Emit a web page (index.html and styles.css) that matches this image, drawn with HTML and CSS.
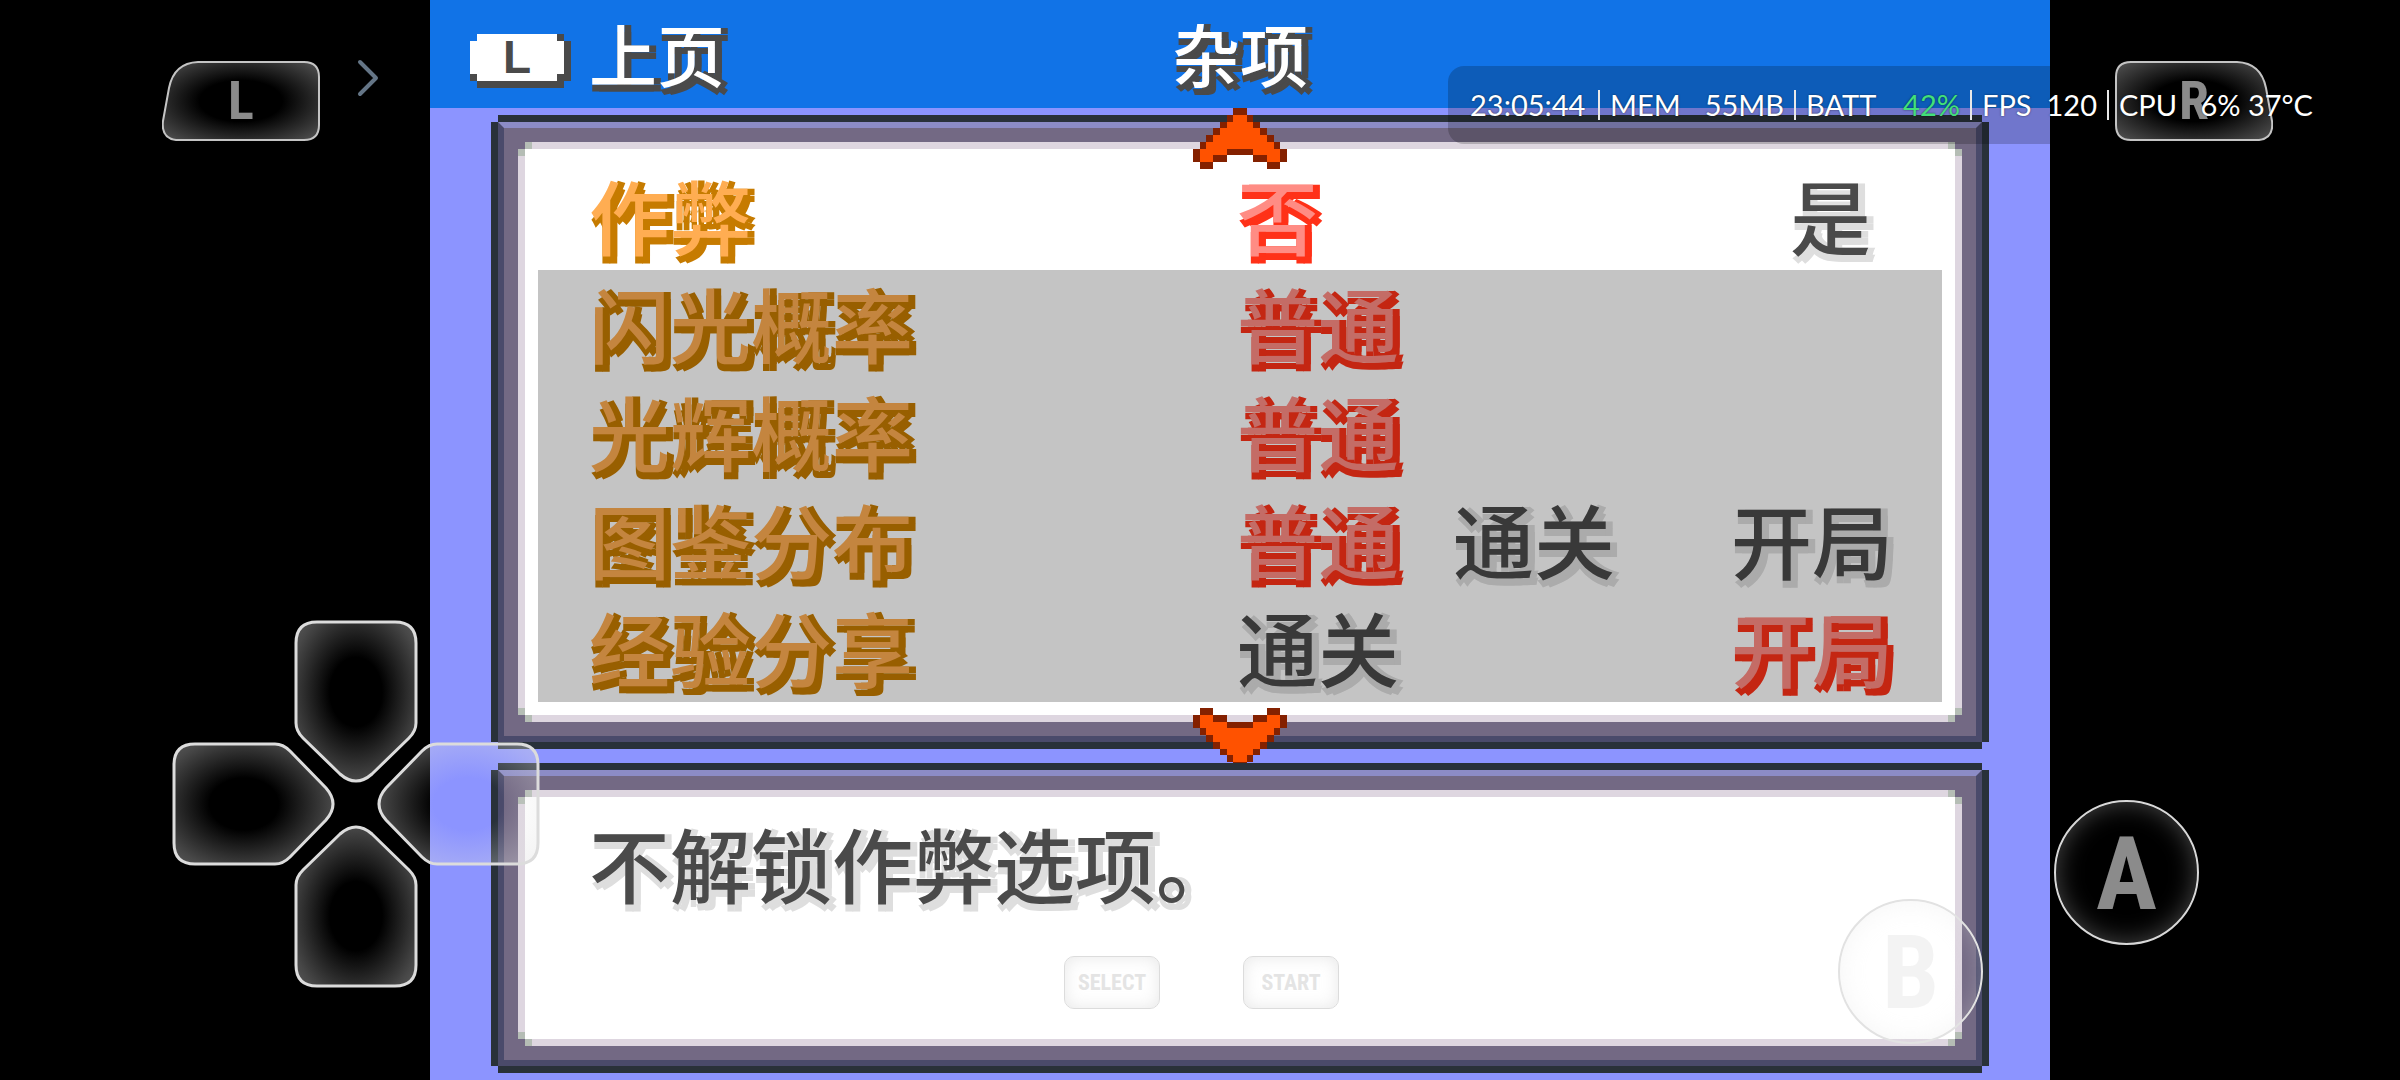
FILE: index.html
```
<!DOCTYPE html>
<html lang="zh-CN">
<head>
    <meta charset="UTF-8">
    <meta name="viewport" content="width=device-width, initial-scale=1.0">
    <title>杂项</title>
    <link rel="stylesheet" href="styles.css">
</head>
<body>

<!-- Shared shapes -->
<svg class="shapes" aria-hidden="true">
    <defs>
        <radialGradient id="glow" cx="50%" cy="44%" r="62%">
            <stop offset="0.35" stop-color="#e0e0e0" stop-opacity="0"/>
            <stop offset="0.9" stop-color="#e0e0e0" stop-opacity="0.32"/>
            <stop offset="1" stop-color="#e0e0e0" stop-opacity="0.36"/>
        </radialGradient>
        <radialGradient id="glowWide" cx="50%" cy="50%" r="66%">
            <stop offset="0.4" stop-color="#e0e0e0" stop-opacity="0"/>
            <stop offset="1" stop-color="#e0e0e0" stop-opacity="0.34"/>
        </radialGradient>
        <symbol id="arm" viewBox="0 0 124 164">
            <path d="M23 2H101Q122 2 122 23V103Q122 111 115 118L78 154Q62 168 46 154L9 118Q2 111 2 103V23Q2 2 23 2Z" fill="url(#glow)" stroke="#dcdcdc" stroke-width="3"/>
        </symbol>
        <symbol id="shoulder" viewBox="0 0 158 80">
            <path d="M36 1H142Q157 1 157 16V64Q157 79 142 79H14Q-1 77 1 60L7 27Q12 2 36 1Z" fill="url(#glowWide)" stroke="#c4c4c4" stroke-width="2"/>
        </symbol>
        <symbol id="scroll" viewBox="0 0 14 9">
            <path fill="#842100" d="M1 0h2v1h2v1h4v-1h2v-1h2v1h1v2h-1v1h-1v1h-1v1h-1v1h-1v1h-1v1h-2v-1h-1v-1h-1v-1h-1v-1h-1v-1h-1v-1h-1v-2h1z"/>
            <path fill="#ff5200" d="M1 1h2v1h2v1h4v-1h2v-1h2v2h-1v1h-1v1h-1v1h-1v1h-1v1h-2v-1h-1v-1h-1v-1h-1v-1h-1v-1h-1z"/>
        </symbol>
    </defs>
</svg>

<main class="game">
    <header class="topbar">
        <button class="prev" type="button"><span class="badge"><span class="badge-key">L</span></span>上页</button>
        <h1>杂项</h1>
    </header>

    <div class="windows">
        <form class="window">
            <div class="edge"><div class="bevel"><div class="panel">
                <div class="row yes-no" role="radiogroup" aria-labelledby="cheat">
                    <span class="name" id="cheat">作弊</span>
                    <div class="options">
                        <label><input type="radio" name="cheat" checked><span>否</span></label>
                        <label class="last"><input type="radio" name="cheat"><span>是</span></label>
                    </div>
                </div>
                <div class="dimmed">
                    <div class="row" role="radiogroup" aria-labelledby="shiny">
                        <span class="name" id="shiny">闪光概率</span>
                        <div class="options">
                            <label><input type="radio" name="shiny" checked><span>普通</span></label>
                        </div>
                    </div>
                    <div class="row" role="radiogroup" aria-labelledby="radiant">
                        <span class="name" id="radiant">光辉概率</span>
                        <div class="options">
                            <label><input type="radio" name="radiant" checked><span>普通</span></label>
                        </div>
                    </div>
                    <div class="row" role="radiogroup" aria-labelledby="dex">
                        <span class="name" id="dex">图鉴分布</span>
                        <div class="options">
                            <label><input type="radio" name="dex" checked><span>普通</span></label>
                            <label><input type="radio" name="dex"><span>通关</span></label>
                            <label class="last"><input type="radio" name="dex"><span>开局</span></label>
                        </div>
                    </div>
                    <div class="row" role="radiogroup" aria-labelledby="share">
                        <span class="name" id="share">经验分享</span>
                        <div class="options">
                            <label><input type="radio" name="share"><span>通关</span></label>
                            <label class="last"><input type="radio" name="share" checked><span>开局</span></label>
                        </div>
                    </div>
                </div>
            </div></div></div>
            <svg class="scroll scroll-up"><use href="#scroll"/></svg>
            <svg class="scroll scroll-down"><use href="#scroll"/></svg>
        </form>

        <section class="window window-help">
            <div class="edge"><div class="bevel"><div class="panel">
                <p class="help">不解锁作弊选项。</p>
            </div></div></div>
        </section>
    </div>
</main>

<!-- Touch controls -->
<div class="controls">
    <button class="key shoulder shoulder-l" type="button"><svg><use href="#shoulder"/></svg><span>L</span></button>
    <button class="key shoulder shoulder-r" type="button"><svg><use href="#shoulder"/></svg><span>R</span></button>
    <button class="key drawer" type="button" aria-label="菜单">
        <svg viewBox="0 0 24 40"><path d="M5 4L21 20L5 36" fill="none" stroke="#647586" stroke-width="4" stroke-linecap="round" stroke-linejoin="round"/></svg>
    </button>

    <div class="dpad">
        <button class="key arm arm-up" type="button" aria-label="上"><svg><use href="#arm"/></svg></button>
        <button class="key arm arm-right" type="button" aria-label="右"><svg><use href="#arm"/></svg></button>
        <button class="key arm arm-down" type="button" aria-label="下"><svg><use href="#arm"/></svg></button>
        <button class="key arm arm-left" type="button" aria-label="左"><svg><use href="#arm"/></svg></button>
    </div>

    <button class="key round round-a" type="button">A</button>
    <button class="key round round-b" type="button">B</button>

    <div class="system">
        <button class="key pill" type="button">SELECT</button>
        <button class="key pill" type="button">START</button>
    </div>
</div>

<!-- Performance overlay -->
<div class="hud-shade"></div>
<ul class="hud">
    <li class="hud-time">23:05:44</li>
    <li class="hud-mem"><span>MEM</span><span>55MB</span></li>
    <li class="hud-batt"><span>BATT</span><span class="good">42%</span></li>
    <li class="hud-fps"><span>FPS</span><span>120</span></li>
    <li class="hud-cpu"><span>CPU</span><span>6% 37°C</span></li>
</ul>

</body>
</html>
```
FILE: styles.css
```
* {
    box-sizing: border-box;
}

body {
    margin: 0;
    min-height: 100vh;
    display: grid;
    grid-template-columns: 430px minmax(0, 1fr) 350px;
    position: relative;
    overflow: hidden;
    background-color: #000;
    font-family: "Noto Sans CJK SC", sans-serif;
}

button {
    border: none;
    padding: 0;
    background: none;
    color: inherit;
    font: inherit;
    cursor: pointer;
}

.shapes {
    position: absolute;
    width: 0;
    height: 0;
}

/* Game screen */
.game {
    grid-column: 2;
    display: flex;
    flex-direction: column;
    background-color: #8c94ff;
}

.topbar {
    display: grid;
    grid-template-columns: 1fr auto 1fr;
    align-items: start;
    height: 108px;
    padding: 0 40px;
    background-color: #1173e7;
    color: #fff;
    font-size: 68px;
    font-weight: 500;
    line-height: 106px;
    text-shadow: 7px 0 #4a4a4a, 0 7px #4a4a4a, 7px 7px #4a4a4a;
}

.topbar h1 {
    margin: 0;
    font: inherit;
}

.prev {
    display: flex;
    align-items: flex-end;
    gap: 18px;
    text-shadow: inherit;
}

.badge {
    margin-bottom: 18px;
    padding: 0 7px 7px 0;
    background-color: #4a4a4a;
    clip-path: polygon(7px 0, 94px 0, 94px 7px, 101px 7px, 101px 47px, 94px 47px, 94px 54px, 7px 54px, 7px 47px, 0 47px, 0 7px, 7px 7px);
}

.badge-key {
    display: block;
    width: 94px;
    height: 47px;
    background-color: #fff;
    clip-path: polygon(7px 0, 87px 0, 87px 7px, 94px 7px, 94px 40px, 87px 40px, 87px 47px, 7px 47px, 7px 40px, 0 40px, 0 7px, 7px 7px);
    color: #4a4a4a;
    font-family: "Liberation Sans", sans-serif;
    font-size: 46px;
    font-weight: bold;
    line-height: 47px;
    text-align: center;
    text-shadow: none;
}

.windows {
    flex: 1;
    display: flex;
    flex-direction: column;
    gap: 14px;
    padding: 7px 61px;
}

.window {
    position: relative;
    display: flex;
}

.window-help {
    flex: 1;
}

.edge {
    flex: 1;
    display: flex;
    border: 7px solid #29313a;
    clip-path: polygon(7px 0, calc(100% - 7px) 0, calc(100% - 7px) 7px, 100% 7px, 100% calc(100% - 7px), calc(100% - 7px) calc(100% - 7px), calc(100% - 7px) 100%, 7px 100%, 7px calc(100% - 7px), 0 calc(100% - 7px), 0 7px, 7px 7px);
}

.bevel {
    flex: 1;
    display: flex;
    border: 6px solid #4a4a6b;
    border-top-color: #8c8cc6;
}

/* white sheet on a pink rim with small notched corners */
.panel {
    --notch: linear-gradient(#736984, #736984);
    --dot: linear-gradient(#b5bdb5, #b5bdb5);
    flex: 1;
    padding: 20px;
    border: 14px solid #736984;
    background:
        var(--notch) 0 0 / 7px 7px,
        var(--notch) 100% 0 / 7px 7px,
        var(--notch) 0 100% / 7px 7px,
        var(--notch) 100% 100% / 7px 7px,
        linear-gradient(#fff, #fff) center / calc(100% - 14px) calc(100% - 14px),
        var(--dot) 0 0 / 14px 14px,
        var(--dot) 100% 0 / 14px 14px,
        var(--dot) 0 100% / 14px 14px,
        var(--dot) 100% 100% / 14px 14px,
        #ded6e0;
    background-repeat: no-repeat;
    background-origin: padding-box;
    background-clip: padding-box;
}

.row {
    display: grid;
    grid-template-columns: 648px 1fr;
    height: 108px;
    padding: 0 49px 0 51px;
    font-size: 81px;
    font-weight: 500;
    line-height: 104px;
}

.yes-no {
    padding-right: 71px;
}

.dimmed {
    background-color: #fff;
    filter: brightness(0.77);
}

.name {
    color: #ffad52;
    text-shadow: 7px 0 #c67b00, 0 7px #c67b00, 7px 7px #c67b00;
}

.options {
    display: flex;
    gap: 54px;
    color: #4a4a4a;
    text-shadow: 7px 0 #dedede, 0 7px #dedede, 7px 7px #dedede;
}

.options .last {
    margin-left: auto;
}

.options label {
    cursor: pointer;
}

.options input {
    position: absolute;
    opacity: 0;
}

.options input:checked + span {
    color: #ff8c84;
    text-shadow: 7px 0 #ff3118, 0 7px #ff3118, 7px 7px #ff3118;
}

.help {
    margin: 0;
    padding-left: 51px;
    color: #4a4a4a;
    font-size: 81px;
    font-weight: 500;
    line-height: 104px;
    text-shadow: 7px 0 #dedede, 0 7px #dedede, 7px 7px #dedede;
}

.scroll {
    position: absolute;
    left: calc(50% - 47px);
    width: 94px;
    height: 61px;
    shape-rendering: crispEdges;
}

.scroll-up {
    top: -7px;
    transform: scaleY(-1);
}

.scroll-down {
    bottom: -20px;
}

/* Touch controls */
.key {
    display: block;
    color: rgba(224, 224, 224, 0.62);
    font-family: "Liberation Sans Narrow", "Roboto Condensed", Roboto, sans-serif;
    font-weight: bold;
}

.key svg {
    display: block;
    width: 100%;
    height: 100%;
}

.shoulder {
    position: absolute;
    top: 61px;
    width: 158px;
    height: 80px;
    font-size: 54px;
    line-height: 80px;
}

.shoulder svg {
    position: absolute;
    inset: 0;
}

.shoulder-l {
    left: 162px;
}

.shoulder-r {
    right: 127px;
}

.shoulder-r svg {
    transform: scaleX(-1);
}

.drawer {
    position: absolute;
    left: 355px;
    top: 58px;
    width: 24px;
    height: 40px;
}

.dpad {
    position: absolute;
    left: 172px;
    bottom: 92px;
    width: 368px;
    height: 368px;
}

.arm {
    position: absolute;
    left: 122px;
    top: 0;
    width: 124px;
    height: 164px;
    transform-origin: 62px 184px;
}

.arm-right {
    transform: rotate(90deg);
}

.arm-down {
    transform: rotate(180deg);
}

.arm-left {
    transform: rotate(270deg);
}

.round {
    position: absolute;
    width: 145px;
    height: 145px;
    border: 2px solid #d8d8d8;
    border-radius: 50%;
    box-shadow: inset 0 0 26px rgba(224, 224, 224, 0.32);
    font-size: 102px;
    line-height: 145px;
}

.round-a {
    right: 201px;
    bottom: 135px;
}

.round-b {
    right: 417px;
    bottom: 36px;
    border-color: #e2e2e2;
    color: rgba(224, 224, 224, 0.4);
}

.system {
    position: absolute;
    left: 1064px;
    bottom: 71px;
    display: flex;
    gap: 83px;
}

.pill {
    width: 96px;
    height: 53px;
    border: 1px solid #dcdcdc;
    border-radius: 10px;
    box-shadow: inset 0 0 16px rgba(210, 210, 210, 0.5);
    color: #e4e4e4;
    font-size: 22px;
    line-height: 51px;
}

/* Performance overlay */
.hud-shade {
    position: absolute;
    left: 1448px;
    right: 350px;
    top: 66px;
    height: 78px;
    border-radius: 16px 0 0 16px;
    background-color: rgba(0, 0, 0, 0.2);
}

.hud {
    position: absolute;
    left: 1470px;
    top: 90px;
    display: flex;
    margin: 0;
    padding: 0;
    list-style: none;
    color: #fff;
    font-family: Lato, sans-serif;
    font-size: 29px;
    line-height: 30px;
    text-shadow: 0 0 2px rgba(0, 0, 0, 0.6);
    white-space: nowrap;
}

.hud li {
    display: flex;
    justify-content: space-between;
    padding: 0 10px;
    border-left: 2px solid #e8e8e8;
}

.hud .hud-time {
    width: 128px;
    padding: 0;
    border: none;
}

.hud-mem {
    width: 196px;
}

.hud-batt {
    width: 176px;
}

.hud-fps {
    width: 137px;
}

.hud-cpu {
    width: 216px;
}

.good {
    color: #42e07a;
}
```
